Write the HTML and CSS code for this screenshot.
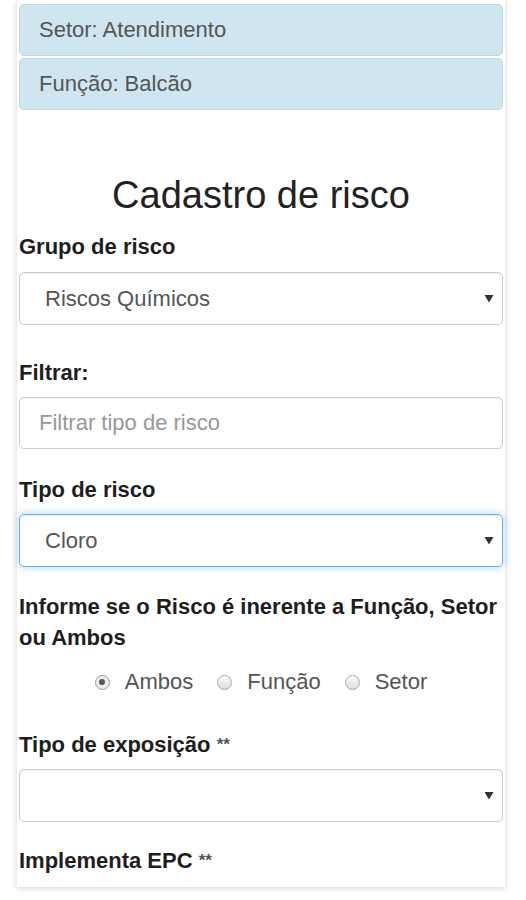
FILE: index.html
```html
<!DOCTYPE html>
<html lang="pt-BR">
<head>
<meta charset="utf-8">
<title>Cadastro de risco</title>
<link rel="stylesheet" href="styles.css">
</head>
<body>
<div class="card">
  <div class="alert alert-first">Setor: Atendimento</div>
  <div class="alert">Função: Balcão</div>

  <h3 class="title">Cadastro de risco</h3>

  <div class="group g-grupo">
    <label class="label">Grupo de risco</label>
    <div class="control select">
      <span class="value">Riscos Químicos</span>
      <svg class="caret" width="10" height="9" viewBox="0 0 10 9"><path d="M0.5 1 H9.5 L5 8.5 Z" fill="#333"/></svg>
    </div>
  </div>

  <div class="group g-filtrar">
    <label class="label">Filtrar:</label>
    <div class="control input"><span class="placeholder">Filtrar tipo de risco</span></div>
  </div>

  <div class="group g-tipo">
    <label class="label">Tipo de risco</label>
    <div class="control select focus">
      <span class="value">Cloro</span>
      <svg class="caret" width="10" height="9" viewBox="0 0 10 9"><path d="M0.5 1 H9.5 L5 8.5 Z" fill="#333"/></svg>
    </div>
  </div>

  <div class="group g-informe">
    <p class="label multi">Informe se o Risco é inerente a Função, Setor ou Ambos</p>
    <div class="radios">
      <span class="radio"><span class="dot checked"></span>Ambos</span>
      <span class="radio"><span class="dot"></span>Função</span>
      <span class="radio"><span class="dot"></span>Setor</span>
    </div>
  </div>

  <div class="group g-expo">
    <label class="label">Tipo de exposição <span class="req">**</span></label>
    <div class="control select">
      <span class="value"></span>
      <svg class="caret" width="10" height="9" viewBox="0 0 10 9"><path d="M0.5 1 H9.5 L5 8.5 Z" fill="#333"/></svg>
    </div>
  </div>

  <div class="group g-epc">
    <label class="label">Implementa EPC <span class="req">**</span></label>
  </div>
</div>
</body>
</html>
```

FILE: styles.css
```css
* { box-sizing: border-box; }

html, body {
  margin: 0;
  padding: 0;
  background: #ffffff;
}

body {
  font-family: "Liberation Sans", Arial, sans-serif;
  font-size: 22px;
  color: #333333;
  padding: 0 21px 13px 17px;
}

.card {
  background: #ffffff;
  padding: 4px 2px 11px 2px;
  box-shadow: 0 1px 6px rgba(0, 0, 0, 0.18);
}

.alert {
  height: 52px;
  background: #cfe6f1;
  border: 1px solid #bfd5e0;
  border-radius: 5px;
  color: #555555;
  padding: 0 19px;
  display: flex;
  align-items: center;
  margin: 0 0 2px 0;
}

.title {
  margin: 64px 0 16px 0;
  font-size: 38px;
  line-height: 42px;
  font-weight: normal;
  color: #222222;
  text-align: center;
}

.label {
  display: block;
  margin: 0 0 10px 0;
  font-weight: bold;
  line-height: 30px;
  color: #1e1e1e;
}

.label.multi {
  line-height: 31px;
  margin: 0 0 14px 0;
}

.req {
  color: #555555;
  font-size: 17px;
  vertical-align: 2px;
}

.control {
  height: 53px;
  border: 1px solid #cccccc;
  border-radius: 5px;
  box-shadow: inset 0 1px 2px rgba(0, 0, 0, 0.06);
  display: flex;
  align-items: center;
  color: #555555;
  background: #ffffff;
}

.select {
  padding: 0 8px 0 25px;
  justify-content: space-between;
}

.select .caret {
  flex: none;
}

.input {
  height: 52px;
  padding: 0 19px;
}

.placeholder {
  color: #999999;
}

.focus {
  border-color: #66afe9;
  box-shadow: inset 0 1px 1px rgba(0, 0, 0, 0.075), 0 0 8px rgba(102, 175, 233, 0.55);
}

.group { margin: 0; }
.g-filtrar { margin-top: 33px; }
.g-filtrar .label, .g-tipo .label, .g-expo .label { margin-bottom: 9px; }
.g-tipo { margin-top: 26px; }
.g-informe { margin-top: 24px; }
.g-expo { margin-top: 33px; }
.g-epc { margin-top: 24px; }
.g-epc .label { margin-bottom: 0; }

.radios {
  display: flex;
  justify-content: center;
  align-items: center;
  gap: 24px;
  height: 30px;
  color: #555555;
}

.radio {
  display: inline-flex;
  align-items: center;
}

.dot {
  width: 15px;
  height: 15px;
  border-radius: 50%;
  border: 1px solid #a9a9a9;
  background: linear-gradient(#fafafa, #dedede);
  margin-right: 15px;
  position: relative;
}

.dot.checked {
  background: #ececec;
  border-color: #9c9c9c;
}

.dot.checked::after {
  content: "";
  position: absolute;
  left: 3.5px;
  top: 3.5px;
  width: 6px;
  height: 6px;
  border-radius: 50%;
  background: #555555;
}
```
